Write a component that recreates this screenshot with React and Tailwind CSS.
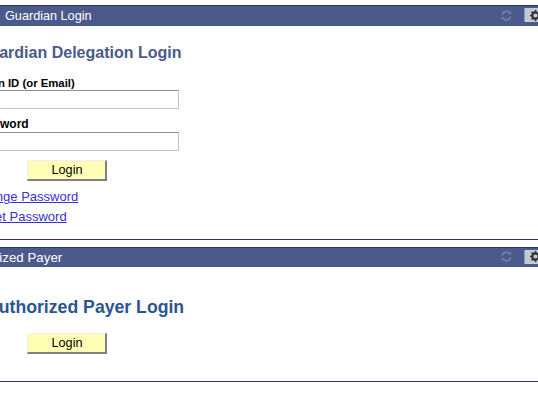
import React from "react";

const PanelHeader = ({ title, titleClass, heightClass }) => (
  <div className={`flex items-center border-t border-[#2a3a6b] bg-[#4a5a8a] ${heightClass}`}>
    <span className={`whitespace-nowrap text-white ${titleClass}`}>{title}</span>
    <div className="mb-[2px] ml-auto flex items-center overflow-hidden">
      <svg width="11" height="11" viewBox="0 0 12 12" fill="none" stroke="#6d82aa" strokeWidth="2" className="mr-[12px]">
        <path d="M1.5 5A4.5 4.5 0 0 1 9.5 3" />
        <path d="M10.5 7A4.5 4.5 0 0 1 2.5 9" />
        <path d="M8 4h3V1" fill="#6d82aa" strokeWidth="0.5" />
        <path d="M4 8H1v3" fill="#6d82aa" strokeWidth="0.5" />
      </svg>
      <div className="flex h-[14px] w-[14px] items-center overflow-hidden border-l border-[#8d97b5] bg-[#c3c8d8] pl-[5px]">
        <svg width="11" height="11" viewBox="0 0 12 12" className="shrink-0">
          <circle cx="6" cy="6" r="3.5" fill="none" stroke="#333" strokeWidth="2.4" />
          <path d="M6 0v2.5M6 9.5V12M0 6h2.5M9.5 6H12M1.8 1.8l1.8 1.8M8.4 8.4l1.8 1.8M1.8 10.2l1.8-1.8M8.4 3.6l1.8-1.8" stroke="#333" strokeWidth="1.8" />
        </svg>
      </div>
    </div>
  </div>
);

const LoginButton = () => (
  <button className="block h-[21px] w-[80px] border border-t-[#f0f0f0] border-l-[#f0f0f0] border-r-2 border-b-2 border-r-[#808080] border-b-[#808080] bg-[#ffffb5] pl-[1px] text-[12.67px] text-black">
    Login
  </button>
);

const TextInput = () => (
  <input className="block h-[19px] w-[219px] border border-[#c4c4c4] border-t-[#8f8f8f] bg-white" />
);

const App = () => {
  return (
    <div className="h-[404px] w-[538px] overflow-hidden bg-white font-['Liberation_Sans',Arial,sans-serif]">
      <div className="-ml-[40px] w-[578px] pt-[5px]">
        <PanelHeader title="Guardian Login" titleClass="pl-[45px] text-[12.67px]" heightClass="h-[21px]" />

        <div className="h-[214px] border-b border-[#2a3a6b]">
          <h2 className="pt-[17px] pl-[17px] text-[16px] leading-[20px] font-bold whitespace-nowrap text-[#4a5a8a]">Guardian Delegation Login</h2>
          <label className="mt-[13px] block pl-[14px] text-[11.33px] leading-[14px] font-bold text-black">Login ID (or Email)</label>
          <TextInput />
          <label className="mt-[8px] block pl-[12px] text-[12px] leading-[14px] font-bold text-black">Password</label>
          <div className="mt-[1px]">
            <TextInput />
          </div>
          <div className="ml-[67px] mt-[9px]">
            <LoginButton />
          </div>
          <div className="mt-[9px] pl-[12px] text-[13px] leading-[14px] text-[#3b2fd0] underline">Change Password</div>
          <div className="mt-[6px] pl-[12px] text-[13px] leading-[14px] text-[#3b2fd0] underline">Reset Password</div>
        </div>

        <div className="mt-[7px]">
          <PanelHeader title="Authorized Payer" titleClass="text-[13.33px]" heightClass="h-[20px]" />
        </div>

        <div className="h-[115px] border-b border-[#2a3a6b]">
          <h2 className="pt-[30px] pl-[26px] text-[17.67px] leading-[20px] font-bold whitespace-nowrap text-[#2b5590]">Authorized Payer Login</h2>
          <div className="ml-[67px] mt-[16px]">
            <LoginButton />
          </div>
        </div>
      </div>
    </div>
  );
};

export default App;
